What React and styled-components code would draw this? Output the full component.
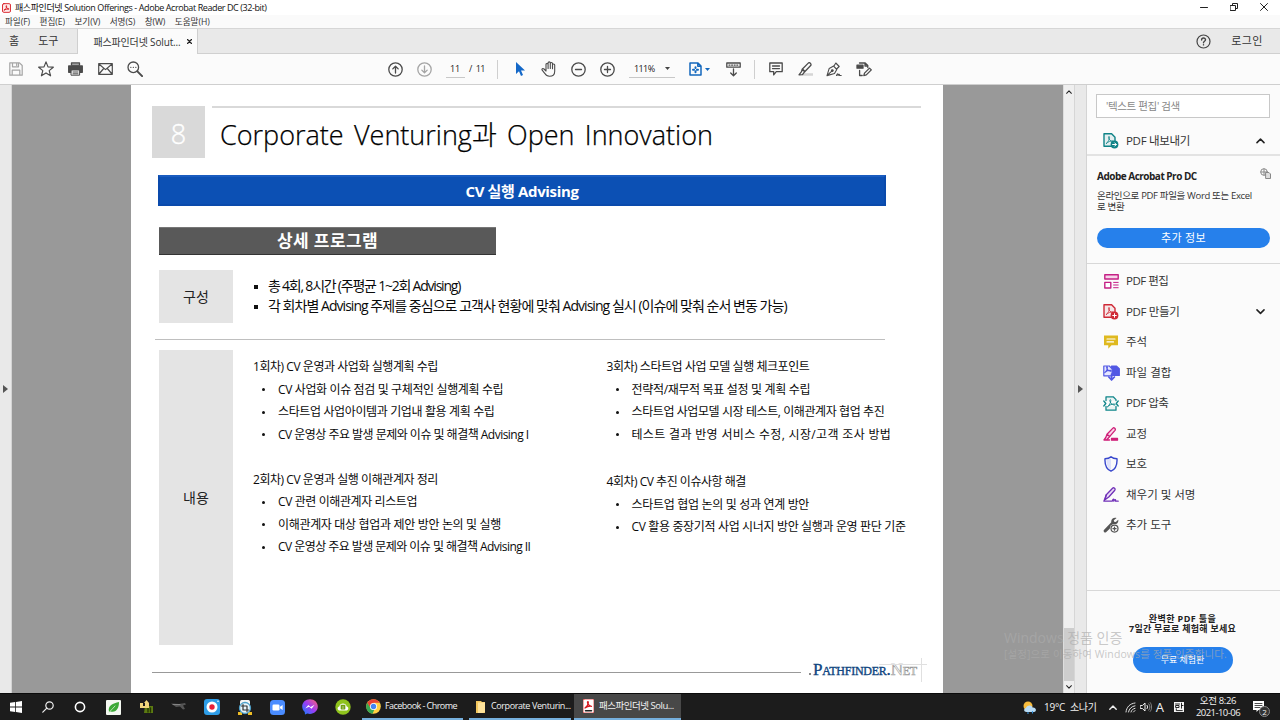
import React from "react";
import styled, { createGlobalStyle } from "styled-components";

const Global = createGlobalStyle`
  * { box-sizing: border-box; }
  html, body { margin: 0; padding: 0; overflow: hidden; }
  body { font-family: "Open Sans", "Noto Sans CJK KR", sans-serif; color: #222; background: #fff; }
  svg { display: block; flex: none; }
`;

const Screen = styled.div`
  position: relative;
  width: 1280px;
  height: 720px;
  display: flex;
  flex-direction: column;
  overflow: hidden;
`;

const Label = styled.span`
  display: block;
  white-space: pre;
  font-size: ${(p) => p.$size || 10}px;
  letter-spacing: ${(p) => p.$ls || 0}px;
  word-spacing: ${(p) => p.$ws || 0}px;
  font-weight: ${(p) => p.$weight || 400};
  color: ${(p) => p.$color || "inherit"};
  margin-left: ${(p) => p.$ml || 0}px;
  line-height: ${(p) => p.$lh || 14}px;
`;
const Gap = styled.span`
  width: ${(p) => p.$w}px;
  flex: none;
`;

/* window chrome */
const TitleBar = styled.div`
  height: 15px;
  flex: none;
  display: flex;
  align-items: center;
  background: #fff;
  color: #111;
  padding-left: 2px;
`;
const WindowButtons = styled.div`
  margin-left: auto;
  display: flex;
  align-items: center;
  gap: 22px;
  padding: 0 12px 2px 0;
`;
const MenuBar = styled.div`
  height: 13px;
  flex: none;
  display: flex;
  align-items: center;
  gap: 9.5px;
  padding-left: 5px;
  background: #fafafa;
  color: #333;
`;
const TabStrip = styled.div`
  height: 26px;
  flex: none;
  display: flex;
  align-items: center;
  background: #e9e9e9;
  border-top: 1px solid #d6d6d6;
  border-bottom: 1px solid #d0d0d0;
  color: #333;
`;
const DocTab = styled.div`
  height: 25px;
  margin: 0 0 -1px 19px;
  width: 121px;
  display: flex;
  align-items: center;
  background: #fbfbfb;
  border-left: 1px solid #cfcfcf;
  border-right: 1px solid #cfcfcf;
  padding-left: 15px;
  gap: 6px;
`;
const TabRight = styled.div`
  margin-left: auto;
  display: flex;
  align-items: center;
  gap: 20px;
  padding-right: 17px;
`;
const ToolBar = styled.div`
  height: 31px;
  flex: none;
  display: flex;
  align-items: center;
  background: #fbfbfb;
  border-bottom: 1px solid #cfcfcf;
`;
const Tool = styled.div`
  width: 18px;
  flex: none;
  display: flex;
  justify-content: center;
  margin-left: ${(p) => p.$ml || 0}px;
`;
const Field = styled.div`
  width: ${(p) => p.$w}px;
  height: 18px;
  display: flex;
  align-items: center;
  justify-content: space-between;
  padding: 0 ${(p) => p.$px || 4}px;
  margin-left: ${(p) => p.$ml}px;
  border-bottom: 1px solid #c8c8c8;
`;
const PageTotal = styled.div`
  width: 16px;
  margin-left: 4px;
`;
const Separator = styled.div`
  width: 1px;
  height: 19px;
  background: #cfcfcf;
  margin-left: ${(p) => p.$ml}px;
`;

/* workspace */
const Workspace = styled.div`
  flex: 1;
  min-height: 0;
  display: flex;
`;
const SideHandle = styled.div`
  width: 12px;
  flex: none;
  display: flex;
  align-items: center;
  justify-content: center;
  background: #e9e9e9;
  border-right: 1px solid #d4d4d4;
`;
const Canvas = styled.div`
  width: 1051px;
  flex: none;
  background: #999;
  padding-left: 119px;
`;
const Paper = styled.div`
  width: 812px;
  height: 608px;
  background: #fff;
  padding-top: 21px;
  color: #0a0a0a;
`;
const Head = styled.div`
  display: flex;
  margin-left: 21px;
  height: 52px;
`;
const HeadNumber = styled.div`
  width: 53px;
  height: 52px;
  display: flex;
  align-items: center;
  justify-content: center;
  background: #d9d9d9;
  color: #fff;
  font-size: 27px;
  font-weight: 300;
  padding-top: 3px;
  -webkit-text-stroke: 0.4px #fff;
`;
const HeadTitle = styled.div`
  width: 709px;
  margin-left: 7px;
  padding: 7px 0 0 8px;
  border-top: 2px solid #d9d9d9;
  color: #000;
  -webkit-text-stroke: 0.25px #000;
`;
const Banner = styled.div`
  width: 728px;
  height: 31px;
  margin: 17px 0 0 27px;
  display: flex;
  align-items: center;
  justify-content: center;
  background: #0c50b4;
  border: 2px solid #0a4aac;
  border-top-color: #1a5cc0;
  color: #fff;
`;
const SubBanner = styled.div`
  width: 337px;
  height: 28px;
  margin: 21px 0 0 28px;
  display: flex;
  align-items: center;
  justify-content: center;
  background: #595959;
  border-top: 1px solid #777;
  border-bottom: 1px solid #333;
  color: #fff;
`;
const Section = styled.div`
  display: flex;
  margin: ${(p) => p.$mt}px 0 0 28px;
  height: ${(p) => p.$h}px;
`;
const SectionLabel = styled.div`
  width: 74px;
  flex: none;
  display: flex;
  align-items: center;
  justify-content: center;
  background: #e4e4e4;
  color: #222;
`;
const SummaryList = styled.div`
  padding: 6px 0 0 21px;
`;
const SummaryRow = styled.div`
  height: 20px;
  display: flex;
  align-items: center;
`;
const Square = styled.span`
  width: 4px;
  height: 4px;
  background: #111;
  margin: 1px 10px 0 0;
`;
const Rule = styled.div`
  width: 730px;
  height: 1px;
  margin: 16px 0 0 24px;
  background: #bfbfbf;
`;
const Sessions = styled.div`
  width: ${(p) => p.$w}px;
  flex: none;
  padding-top: 6px;
  display: flex;
  flex-direction: column;
  gap: ${(p) => p.$gap}px;
`;
const SessionLine = styled.div`
  height: 22.5px;
  display: flex;
  align-items: center;
`;
const Dot = styled.span`
  width: 3px;
  height: 3px;
  border-radius: 50%;
  background: #111;
  margin: 0 13px 0 9px;
`;
const Footer = styled.div`
  display: flex;
  align-items: center;
  height: 24px;
  margin: 15px 0 0 21px;
`;
const FootRule = styled.div`
  width: 649px;
  height: 1px;
  background: #999;
`;
const Brand = styled.div`
  position: relative;
  margin: -5px 0 0 12px;
  font-family: "Liberation Serif", serif;
  font-variant: small-caps;
  font-size: 17px;
  line-height: 20px;
  letter-spacing: -0.25px;
  color: #0f4580;
  display: flex;
  -webkit-text-stroke: 0.35px #0f4580;
`;
const BrandNet = styled.span`
  color: #fff;
  -webkit-text-stroke: 0.6px #999;
`;
const BrandDot = styled.i`
  width: 2px;
  height: 2px;
  margin: 13px 2px 0 -4px;
  background: #888;
`;
const Cross = styled.div`
  position: absolute;
  right: -10px;
  top: -2px;
`;

const ScrollBar = styled.div`
  width: 12px;
  flex: none;
  display: flex;
  flex-direction: column;
  align-items: center;
  background: #efefef;
  border-left: 1px solid #ddd;
  border-right: 1px solid #d6d6d6;
  padding: 5px 0 4px;
`;
const Thumb = styled.div`
  width: 10px;
  height: 53px;
  margin: auto 0 4px;
  background: #cdcdcd;
`;

/* tool panel */
const Panel = styled.div`
  flex: 1;
  background: #fbfbfb;
  display: flex;
  flex-direction: column;
  color: #333;
`;
const Search = styled.div`
  height: 24px;
  margin: 9px 10px 0 9px;
  padding-left: 9px;
  display: flex;
  align-items: center;
  background: #fff;
  border: 1px solid #c8c8c8;
  color: #888;
`;
const ExportRow = styled.div`
  height: 36px;
  display: flex;
  align-items: center;
  gap: 7px;
  padding: 10px 15px 0 16px;
`;
const ToolList = styled.div`
  padding-top: 2px;
`;
const ToolRow = styled.div`
  height: 30.5px;
  display: flex;
  align-items: center;
  gap: 6px;
  padding: 0 15px;
`;
const RowEnd = styled.span`
  margin-left: auto;
`;
const Promo = styled.div`
  height: 110px;
  border-top: 2px solid #e3e3e3;
  border-bottom: 1px solid #d8d8d8;
  padding: 12px 10px 0 10px;
`;
const PromoHead = styled.div`
  display: flex;
  justify-content: space-between;
  align-items: center;
  height: 15px;
  margin-bottom: 7px;
`;
const PromoIcon = styled.span`
  margin: -5px -1px 0 0;
`;
const Pill = styled.div`
  width: ${(p) => p.$w}px;
  height: ${(p) => p.$h}px;
  margin-top: ${(p) => p.$mt}px;
  border-radius: 14px;
  background: #2680eb;
  color: #fff;
  display: flex;
  align-items: center;
  justify-content: center;
`;
const Trial = styled.div`
  margin-top: auto;
  height: 103px;
  border-top: 1px solid #d8d8d8;
  padding: 23px 2px 0 0;
  display: flex;
  flex-direction: column;
  align-items: center;
`;

const Watermark = styled.div`
  position: absolute;
  left: 1004px;
  top: 629px;
  color: rgba(172, 172, 172, 0.65);
`;

/* taskbar */
const TaskBar = styled.div`
  height: 27px;
  flex: none;
  display: flex;
  background: #1c1c1c;
  border-top: 1px solid #0b0b0b;
  color: #f2f2f2;
`;
const Launchers = styled.div`
  width: 362px;
  display: flex;
  align-items: center;
`;
const Launcher = styled.div`
  width: ${(p) => p.$w || 33}px;
  display: flex;
  justify-content: center;
`;
const Task = styled.div`
  width: ${(p) => p.$w}px;
  margin-right: ${(p) => p.$mr || 0}px;
  padding-left: ${(p) => p.$pl}px;
  display: flex;
  align-items: center;
  gap: 4px;
  background: ${(p) => (p.$active ? "#484848" : "transparent")};
  border-bottom: 2px solid #76b0de;
`;
const Tray = styled.div`
  margin-left: auto;
  display: flex;
  align-items: center;
`;
const Clock = styled.div`
  width: 50px;
  margin-left: 9px;
  display: flex;
  flex-direction: column;
  align-items: center;
`;
const Notice = styled.div`
  position: relative;
  margin: 0 15px 0 10px;
`;
const Badge = styled.span`
  position: absolute;
  left: 6px;
  top: 5px;
  width: 11px;
  height: 11px;
  border-radius: 50%;
  background: #333;
  border: 1px solid #888;
  font-size: 8px;
  line-height: 9px;
  text-align: center;
`;

const Svg = ({ w = 16, h, vb, children, c = "#4b4b4b", sw = 1.3 }) => (
  <svg width={w} height={h || w} viewBox={vb || `0 0 ${w} ${h || w}`} fill="none" stroke={c} strokeWidth={sw} strokeLinejoin="round" strokeLinecap="round">
    {children}
  </svg>
);

const Swirl = "M3.3 10.5c1.8-1.2 3.2-4.3 3.2-6.2 0-1.2-1-1.2-1 0 0 2 2.4 4.4 4.6 4.6 1.2 0 1-1.1-.3-1.1-2 0-4.6.8-6.5 2.7z";

const Chevron = ({ up, c = "#222", w = 8 }) => (
  <Svg w={w} h={w / 2 + 1} vb="0 0 8 5" c={c} sw={1.4}>
    <path d={up ? "M.8 4.2 4 1l3.2 3.2" : "M.8.8 4 4 7.2.8"} />
  </Svg>
);
const Triangle = () => (
  <Svg w={5} h={8} c="none"><path d="M0 0v8l5-4z" fill="#555" /></Svg>
);
const Down = ({ c = "#444" }) => (
  <Svg w={5} h={3} c="none"><path d="M0 0h5L2.5 3z" fill={c} /></Svg>
);

const SaveIcon = () => (
  <Svg w={14} c="#a5a5a5" sw={1.2}><path d="M.8.8h9.7l2.7 2.7v9.7H.8zM3.5.8v4h6v-4M7.700 1.800v1.700M3.200 13V8.200h7.600V13" /></Svg>
);
const StarIcon = () => (
  <Svg w={16} sw={1.2}><path d="m8 .9 2 5 5.3.3-4.1 3.4 1.4 5.2L8 11.9l-4.6 2.9 1.4-5.2L.7 6.2 6 5.9z" /></Svg>
);
const PrintIcon = () => (
  <Svg w={15} h={14}><path d="M3.5 1h8v2.2h-8z" /><path d="M.7 4h13.600v6.300H12V8H3v2.300H.7z" fill="#4b4b4b" /><path d="M3.400 8h8.200v5.200H3.400zM5 10h5M5 11.800h5" strokeWidth="1" fill="#fbfbfb" /></Svg>
);
const MailIcon = () => (
  <Svg w={15} h={12} sw={1.2}><path d="M.7.7h13.600v10.600H.7zM.9 1l6.600 5.600L14.100 1M1 11l4.700-5.500M14 11 9.300 5.500" /></Svg>
);
const FindIcon = () => (
  <Svg w={16}><circle cx="6.3" cy="6.3" r="5.3" /><path d="m10.4 10.4 4.7 4.7" strokeWidth="2" /><path d="M3.8 6.3h.1M6.3 6.3h.1M8.8 6.3h.1" /></Svg>
);
const CircleIcon = ({ d, c }) => (
  <Svg w={15} c={c}><circle cx="7.5" cy="7.5" r="6.7" /><path d={d} /></Svg>
);
const HandIcon = () => (
  <Svg w={17} h={16} sw={1.1}><path d="M5 9.800V3.500c0-1.400 2.100-1.400 2.100 0V7.500M7.100 3.300V2c0-1.500 2.200-1.500 2.200 0v5.500M9.300 2.600c0-1.400 2.200-1.400 2.200 0v5.200M11.500 4c0-1.400 2.200-1.400 2.200 0v6.200c0 3.300-2 5.100-5.200 5.100-2.300 0-3.600-1-4.800-3L1.200 9.200C.3 7.800 1.900 7 3 8l2 2" /></Svg>
);
const FitIcon = () => (
  <Svg w={13} h={14} c="#1468bd" sw={1.5}><path d="M1 1h8l3 3v9H1zM8.800 1v3.300H12" /><path d="M6.500 5.300v.8M6.500 9.300v.9M4 7.700h1M8 7.700h1" strokeWidth="2" /></Svg>
);
const ReadIcon = () => (
  <Svg w={15}><path d="M.8 1h13.400v4.200H.8z" /><path d="M3 3.100h9" strokeDasharray="1 1.600" /><path d="M7.500 7v6.600M4.700 11l2.800 2.800 2.800-2.800" /></Svg>
);
const CommentIcon = () => (
  <Svg w={14}><path d="M.8 1h12.400v8.700H7.300l-2.600 3.200V9.700H.8zM3.500 4h7M3.500 6.600h7" /></Svg>
);
const HighlightIcon = () => (
  <Svg w={15} h={14}><path d="M5.500 12.500h9" stroke="#d5d5d5" strokeWidth="2.500" /><path d="M4.200 7.200 10.500.9c1-.9 3 1 2.400 2.400L6.700 9.700zM4.200 7.200l-.7 2.500L1 12.800l3.500-.2 2.200-2.900M5 7.500l2 2" /></Svg>
);
const SignIcon = () => (
  <Svg w={16} h={15} sw={1.1}><path d="M1 13.600 3.200 6.400l4.400-2.300 3.200 3.400-2.300 4L1 13.600zm0 0L6 8.800M8 4l1.800-3 3.400 3.500-2.600 2.500M10.500 13.500c1-2.400 1.800-2.200 1.500 0 1.200-1.700 1.500-1.400 1.600 0h1.600" /><circle cx="6.300" cy="8.600" r=".9" fill="#4b4b4b" /></Svg>
);
const EditPageIcon = () => (
  <Svg w={16} h={15}><path d="M1 3.200h6v3H1z" fill="#4b4b4b" /><path d="M3.500 1h5.700l2.600 2.500v2M9 1v3h2.800M3.600 8.500v5h2.600M7.800 13.600l.7-2.500 5-5 1.800 1.800-5 5z" /></Svg>
);

const PageShape = ({ c }) => (
  <>
    <path d="M1 .8h7.6L12 4.2v9H1z" fill={c + "18"} stroke={c} />
    <path d={Swirl} stroke={c} strokeWidth=".8" />
  </>
);
const ExportIcon = () => (
  <Svg w={16} c="#0f8387" sw={1.4}><PageShape c="#0f8387" /><circle cx="11.5" cy="11.5" r="3.900" fill="#0f8387" stroke="none" /><path d="M9.600 11.500h3.600m-1.500-1.600 1.600 1.600-1.600 1.600" stroke="#fff" strokeWidth="1" /></Svg>
);
const EditPdfIcon = () => (
  <Svg w={15} c="#c52085" sw={1.4}><path d="M.8.8h13.400V5H.8z" fill="#f6d5e9" /><path d="M.8 8.400h6v5.600h-6z" fill="#fff" /><path d="M9.600 8.400h4.600M9.600 11h4.600M9.600 13.700h4.600" strokeWidth="1" /></Svg>
);
const CreateIcon = () => (
  <Svg w={16} c="#cf2936" sw={1.4}><PageShape c="#cf2936" /><circle cx="11.5" cy="11.5" r="3.900" fill="#cf2936" stroke="none" /><path d="M9.700 11.500h3.600M11.500 9.700v3.600" stroke="#fff" strokeWidth="1" /></Svg>
);
const NoteIcon = () => (
  <Svg w={14} c="none"><path d="M0 .5h14v9.800H7.500L4.300 13.800V10.300H0z" fill="#dfb91f" /><path d="M3 4h8M3 6.900h6.500" stroke="#fff" strokeWidth="1.200" /></Svg>
);
const CombineIcon = () => (
  <Svg w={17} h={16} c="#5258e4" sw={1.2}><path d="M8.500 1h4.800l3 2.800v6.700H8.500z" fill="#5258e4" /><path d="M.8 1h5.500l2.800 2.800v7H.8z" fill="#e5e6ff" /><g transform="translate(-1.1 -1.3) scale(.85)"><path d={Swirl} /></g><path d="M8.600 9v5.500M5.800 12l2.800 3 2.800-3" strokeWidth="1.700" /></Svg>
);
const CompressIcon = () => (
  <Svg w={16} h={15} c="#10868a"><path d="M3 4.500V.8h7.200L13 3.600v1M3 10.500v3.700h10v-3.700" fill="#10868a11" /><g transform="translate(1.300 .2)"><path d={Swirl} strokeWidth=".9" /></g><path d="m.8 5 2 2.500-2 2.500M15.200 5l-2 2.500 2 2.500" /></Svg>
);
const RedactIcon = () => (
  <Svg w={16} h={14} c="#cf1f78"><path d="M4 7.200 9.900 1.100c1-1 3.200.8 2.100 2.200L6.600 9.600zM4 7.200 2.800 10.500 1 13h5.500" fill="#f8d4e7" /><path d="M6.600 9.600 4 12.500" /><path d="M8.500 11.400h6v1.800h-6z" fill="#cf1f78" /></Svg>
);
const ShieldIcon = () => (
  <Svg w={14} h={16} c="#3847cc" sw={1.4}><path d="M7 2.600v11.200C3.600 12 2.400 9.500 2.500 3.800z" fill="#dfe2fb" stroke="none" /><path d="M7 .8c1.600 1.500 3.600 2 6 2 .3 5.500-.6 10-6 12.300C1.600 12.800.7 8.300 1 2.800c2.400 0 4.400-.5 6-2z" /></Svg>
);
const FillIcon = () => (
  <Svg w={16} h={15} c="#7030b8"><path d="M3.300 7.700 9.800 1c1-.8 3 .8 2 2.200L5.800 10 2 12.800z" fill="#eadcf6" /><path d="M.9 14.200 3.300 7.700M.9 14.200h8.300c1-2.800 2-2.600 1.600 0 1.300-2.300 2-1.600 1.800 0h2.600" /></Svg>
);
const WrenchIcon = () => (
  <Svg w={16} c="none">
    <path d="M13.600.9 10.800 3.200l.3 1.500 1.700.4 2.400-2.300c.7 2.500-1.200 4.700-3.700 4.500L3 15.200C1.700 16.200-.1 14.400.9 13.100L8.300 5.300C7.700 2.300 10.400-.1 13.600.9z" fill="#555" />
    <circle cx="11.500" cy="11.600" r="4.600" fill="#fbfbfb" />
    <circle cx="11.500" cy="11.600" r="3.500" stroke="#555" strokeWidth="1.200" />
    <path d="M9.900 11.600h3.200M11.500 10v3.200" stroke="#555" strokeWidth="1.200" />
  </Svg>
);
const AcrobatIcon = () => (
  <Svg w={9} h={10} vb="0 0 12 13" c="#d71920" sw={1.2}>
    <rect x=".7" y=".7" width="10.600" height="11.600" rx="1.800" fill="#ffe9e9" />
    <path d="M3 9.500c1.700-1 3.200-3.600 3.200-5.400 0-1-.9-1-.8 0 .1 1.700 2 3.700 3.700 3.700M3 9c1.800-.8 3.700-1.200 5.800-1.100" strokeWidth="1.200" />
  </Svg>
);

const menus = ["파일(F)", "편집(E)", "보기(V)", "서명(S)", "창(W)", "도움말(H)"];

const tools = [
  { name: "PDF 편집", Icon: EditPdfIcon, ls: -0.5 },
  { name: "PDF 만들기", Icon: CreateIcon, ls: -0.35, open: true },
  { name: "주석", Icon: NoteIcon, ls: 0 },
  { name: "파일 결합", Icon: CombineIcon, ls: 0 },
  { name: "PDF 압축", Icon: CompressIcon, ls: -0.5 },
  { name: "교정", Icon: RedactIcon, ls: 0 },
  { name: "보호", Icon: ShieldIcon, ls: 0 },
  { name: "채우기 및 서명", Icon: FillIcon, ls: 0 },
  { name: "추가 도구", Icon: WrenchIcon, ls: 0 },
];

const leftSessions = [
  { head: ["1회차) CV 운영과 사업화 실행계획 수립", -0.45], items: [["CV 사업화 이슈 점검 및 구체적인 실행계획 수립", -0.37], ["스타트업 사업아이템과 기업내 활용 계획 수립", -0.37], ["CV 운영상 주요 발생 문제와 이슈 및 해결책 Advising I", -0.52]] },
  { head: ["2회차) CV 운영과 실행 이해관계자 정리", -0.45], items: [["CV 관련 이해관계자 리스트업", -0.4], ["이해관계자 대상 협업과 제안 방안 논의 및 실행", -0.33], ["CV 운영상 주요 발생 문제와 이슈 및 해결책 Advising II", -0.55]] },
];
const rightSessions = [
  { head: ["3회차) 스타트업 사업 모델 실행 체크포인트", -0.45], items: [["전략적/재무적 목표 설정 및 계획 수립", -0.33], ["스타트업 사업모델 시장 테스트, 이해관계자 협업 추진", -0.41], ["테스트 결과 반영 서비스 수정, 시장/고객 조사 방법", 0.33]] },
  { head: ["4회차) CV 추진 이슈사항 해결", -0.48], items: [["스타트업 협업 논의 및 성과 연계 방안", -0.32], ["CV 활용 중장기적 사업 시너지 방안 실행과 운영 판단 기준", -0.35]] },
];

const SessionGroup = ({ head, items }) => (
  <div>
    <SessionLine><Label $size={12} $ls={head[1]}>{head[0]}</Label></SessionLine>
    {items.map(([text, ls]) => (
      <SessionLine key={text}><Dot /><Label $size={12} $ls={ls}>{text}</Label></SessionLine>
    ))}
  </div>
);

const Document = () => (
  <Paper>
    <Head>
      <HeadNumber>8</HeadNumber>
      <HeadTitle><Label $size={27} $lh={40} $weight={300} $ws={3.3}>Corporate Venturing과 Open Innovation</Label></HeadTitle>
    </Head>
    <Banner><Label $size={15} $weight={700} $ls={-0.35} $lh={18}>CV 실행 Advising</Label></Banner>
    <SubBanner><Label $size={17} $weight={700} $ls={0.4} $lh={20}>상세 프로그램</Label></SubBanner>
    <Section $mt={15} $h={53}>
      <SectionLabel><Label $size={14} $lh={18}>구성</Label></SectionLabel>
      <SummaryList>
        <SummaryRow><Square /><Label $size={14} $ls={-1.22} $lh={18}>총 4회, 8시간 (주평균 1~2회 Advising)</Label></SummaryRow>
        <SummaryRow><Square /><Label $size={14} $ls={-0.96} $lh={18}>각 회차별 Advising 주제를 중심으로 고객사 현황에 맞춰 Advising 실시 (이슈에 맞춰 순서 변동 가능)</Label></SummaryRow>
      </SummaryList>
    </Section>
    <Rule />
    <Section $mt={10} $h={295}>
      <SectionLabel><Label $size={14} $lh={18}>내용</Label></SectionLabel>
      <Gap $w={20} />
      <Sessions $w={353.5} $gap={22.5}>{leftSessions.map((g) => <SessionGroup key={g.head[0]} {...g} />)}</Sessions>
      <Sessions $w={320} $gap={25}>{rightSessions.map((g) => <SessionGroup key={g.head[0]} {...g} />)}</Sessions>
    </Section>
    <Footer>
      <FootRule />
      <Brand>
        <BrandDot />Pathfinder.<BrandNet>Net</BrandNet>
        <Cross><Svg w={48} h={24} c="#e0e0e0" sw={1}><path d="M0 6.500h48M42.500 0v24" /></Svg></Cross>
      </Brand>
    </Footer>
  </Paper>
);

const ToolPanel = () => (
  <Panel>
    <Search><Label $size={10.5} $ls={-0.35}>'텍스트 편집' 검색</Label></Search>
    <ExportRow>
      <ExportIcon /><Label $size={11.5} $ls={-0.3}>PDF 내보내기</Label><RowEnd><Chevron up w={9} /></RowEnd>
    </ExportRow>
    <Promo>
      <PromoHead>
        <Label $size={10} $weight={700} $ls={-0.5} $color="#222">Adobe Acrobat Pro DC</Label>
        <PromoIcon><Svg w={11} c="#888" sw={1}><circle cx="4" cy="4" r="3.300" /><path d="M1 4h6M4 1v6M6 4.500h3l1.500 1.500v4.500H6z" fill="#ddd" /></Svg></PromoIcon>
      </PromoHead>
      <Label $size={9.5} $lh={11} $ls={-0.34}>{"온라인으로 PDF 파일을 Word 또는 Excel\n로 변환"}</Label>
      <Pill $w={173} $h={20} $mt={16}><Label $size={11} $ls={0.3}>추가 정보</Label></Pill>
    </Promo>
    <ToolList>
      {tools.map(({ name, Icon, ls, open }) => (
        <ToolRow key={name}>
          <Tool><Icon /></Tool>
          <Label $size={11.5} $ls={ls}>{name}</Label>
          {open && <RowEnd><Chevron w={9} /></RowEnd>}
        </ToolRow>
      ))}
    </ToolList>
    <Trial>
      <Label $size={9} $lh={10} $weight={700} $color="#222" $ls={0.4}>완벽한 PDF 툴을</Label>
      <Label $size={9} $lh={10} $weight={700} $color="#222" $ls={0.25}>7일간 무료로 체험해 보세요</Label>
      <Pill $w={100} $h={26} $mt={13}><Label $size={9}>무료 체험판</Label></Pill>
    </Trial>
  </Panel>
);

const Bottom = () => (
  <TaskBar>
    <Launchers>
      <Launcher $w={32}><Svg w={12} c="none"><path d="M0 1.700 5.200 1v4.600H0zM6 .9 12 0v5.600H6zM0 6.400h5.200V11L0 10.300zM6 6.400h6V12l-6-.9z" fill="#fff" /></Svg></Launcher>
      <Launcher $w={32}><Svg w={12} c="#eee" sw={1.2}><circle cx="7.500" cy="4.500" r="3.700" /><path d="M4.800 7.200.8 11.200" /></Svg></Launcher>
      <Launcher $w={32}><Svg w={12} c="#fff" sw={1.6}><circle cx="6" cy="6" r="4.600" /></Svg></Launcher>
      <Launcher $w={34}><Svg w={15} c="none"><rect width="15" height="15" rx="1" fill="#f4f8f1" /><path d="M3 12C1.500 5 7 3.500 13 2c0 6-2.500 11-8.500 9.500z" fill="#3ca936" /><path d="M2.500 13 9 6" stroke="#d8f0d0" strokeWidth=".8" /></Svg></Launcher>
      <Launcher><Svg w={14} c="none"><path d="M5 6h8v7H4z" fill="#5c7a12" /><path d="M8 7v5M10.500 8v4" stroke="#223300" /><path d="M0 3h3v3h2V3H4l2.500-3L9 3v5H0z" fill="#f1d67c" /></Svg></Launcher>
      <Launcher $w={32}><Svg w={16} h={10} c="none"><path d="M0 1.500 8 2l6-1 1 1.500-3 1 2 3.500-2 .5-3-3L5 5z" fill="#555" /><path d="M2 2.500h7" stroke="#999" strokeWidth=".7" /></Svg></Launcher>
      <Launcher><Svg w={16} c="none"><rect width="16" height="16" rx="3" fill="#2d9de8" /><circle cx="8" cy="8" r="5.500" fill="#fff" /><circle cx="8" cy="8" r="2.700" fill="#e8203a" /><circle cx="14" cy="2.200" r=".8" fill="#fff" /></Svg></Launcher>
      <Launcher><Svg w={14} h={15} c="none"><path d="M0 12h4v3H0zM10 12h4v3h-4z" fill="#efbd25" /><rect x="2" width="10" height="6" rx="1.500" fill="#f5f5f5" /><circle cx="7" cy="8" r="5.500" fill="#e9f4fa" stroke="#4d9fc8" /><path d="M5 4.500v5.500h5.500M3.500 6H9v5.500" stroke="#333" strokeWidth="1.200" /></Svg></Launcher>
      <Launcher $w={32}><Svg w={15} c="none"><rect width="15" height="15" rx="3.500" fill="#4a8cff" /><rect x="2.500" y="4.500" width="7" height="6" rx="1.200" fill="#fff" /><path d="m10 6.700 2.600-1.800v5.200L10 8.300z" fill="#fff" /></Svg></Launcher>
      <Launcher><svg width="16" height="16" viewBox="0 0 16 16"><defs><linearGradient id="ms" x1="0" y1="1" x2="1" y2="0"><stop offset="0" stopColor="#0a86ff" /><stop offset=".5" stopColor="#9b3cf6" /><stop offset="1" stopColor="#ff6470" /></linearGradient></defs><path d="M8 .3C3.500.3.2 3.500.2 7.600c0 2.200.9 4.100 2.500 5.400L3 15.500l2.300-1c4.900 1.500 10.500-1.300 10.500-6.900C15.800 3.500 12.500.3 8 .3z" fill="url(#ms)" /><path d="m3.300 9.600 3-3.600 2.300 2 4-2.300-3 4-2.500-2z" fill="#fff" /></svg></Launcher>
      <Launcher><Svg w={16} c="none"><circle cx="8" cy="8" r="7.700" fill="#8fc31c" /><path d="M4.500 11.500c-2.500-.5-2.400-3.500-.2-4C5 3.500 11 3.500 11.700 7.500c2.200.5 2.200 3.500-.2 4z" fill="#fff" /><path d="M6.300 6.300h3.400v3.500H6.300zM6.300 8h3" stroke="#709f12" /></Svg></Launcher>
    </Launchers>
    <Task $w={101} $mr={6} $pl={4}>
      <Svg w={15} c="none"><circle cx="7.500" cy="7.500" r="7.300" fill="#ffcf42" /><path d="M1.200 3.800a7.300 7.300 0 0 1 12.600 0H7.500L4 8.500z" fill="#e84335" /><path d="M1.200 3.800 5 9.800l3.300 1L6.500 14.800A7.300 7.300 0 0 1 1.200 3.800z" fill="#38a852" /><circle cx="7.500" cy="7.500" r="3.500" fill="#fff" /><circle cx="7.500" cy="7.500" r="2.700" fill="#4385f4" /></Svg>
      <Label $size={9} $ls={-0.55}>Facebook - Chrome</Label>
    </Task>
    <Task $w={102} $mr={3} $pl={6}>
      <Svg w={11} h={13} c="none"><path d="M1 1h5l1 1h3v11H1z" fill="#f3c75d" /><path d="M3 2.500h7V12l-2 1H3z" fill="#ffe39a" /></Svg>
      <Label $size={9} $ls={-0.4} $ml={1}>Corporate Venturin...</Label>
    </Task>
    <Task $w={107} $pl={9} $active>
      <Svg w={11} h={14} c="none"><rect width="11" height="14" rx="1" fill="#fff" stroke="#e42a2a" strokeWidth=".8" /><path d="M2 9c1.700-1 3.300-3.500 3.300-5.500 0-1-.9-1-.8 0 .1 1.800 2 3.800 4 3.800-2.300-.3-4.500.3-6.500 1.700" stroke="#d71920" /><path d="M2.500 11.800h6" stroke="#222" strokeWidth="1.500" /></Svg>
      <Label $size={9.5} $ls={-0.48} $ml={1}>패스파인더넷 Solu...</Label>
    </Task>
    <Tray>
      <Svg w={14} h={13} c="none"><circle cx="5" cy="5" r="4.500" fill="#f8bc3c" /><path d="M3.500 11C.5 11 .5 7.500 3 7c.5-3 5.500-3.500 6.500-.5 4-.5 4.500 4.500 1.500 4.500z" fill="#b9dcf5" /><path d="M5 11.500v1M9.500 10.500v1.500" stroke="#3291db" strokeWidth="1.200" /></Svg>
      <Label $size={10} $ml={7} $ls={-0.25} $ws={2.5}>19°C 소나기</Label>
      <Gap $w={12} /><Chevron up c="#eee" w={8} />
      <Gap $w={8} /><Svg w={11} c="#ddd" sw={1}><path d="M1 10C1.500 5 5 1.500 10 1M3.500 10C4 7 6.500 4.300 10 3.800M6 10c.5-2 2-3.300 4-3.700M8.500 10l1.500-1.500" /></Svg>
      <Gap $w={4} /><Svg w={12} h={10} c="#eee" sw={1}><path d="M.6 3.500h1.800L5 1v8L2.400 6.500H.6zM7 3.300c.8.9.8 2.500 0 3.400" /><path d="M8.700 1.800c1.700 1.800 1.700 4.600 0 6.400M10.200.6c2 2.500 2 6.300 0 8.800" stroke="#888" /></Svg>
      <Label $size={13} $ml={4}>A</Label>
      <Gap $w={10} /><Svg w={10} c="none"><rect width="10" height="10" fill="#f4f4f4" /><path d="M1.500 2h4M2 3.500h3v2H2zM7.500 1.200v5M7.500 3.500H9M2.300 6.800v1.800h6" stroke="#111" strokeWidth=".9" /></Svg>
      <Clock>
        <Label $size={9.5} $lh={12} $ls={-0.35}>오전 8:26</Label>
        <Label $size={9.5} $lh={12} $ls={-0.55}>2021-10-06</Label>
      </Clock>
      <Notice>
        <Svg w={12} c="none"><path d="M0 0h11v9H5.500L3.500 11V9H0z" fill="#fff" /><path d="M2 2.500h7M2 4.500h7M2 6.500h5" stroke="#222" strokeWidth=".8" /></Svg>
        <Badge>2</Badge>
      </Notice>
    </Tray>
  </TaskBar>
);

export default function App() {
  return (
    <Screen>
      <Global />
      <TitleBar>
        <AcrobatIcon />
        <Label $size={9} $ml={4} $ls={-0.41}>패스파인더넷 Solution Offerings - Adobe Acrobat Reader DC (32-bit)</Label>
        <WindowButtons>
          <Svg w={8} c="#222" sw={1}><path d="M.5 4.500h7" /></Svg>
          <Svg w={8} c="#222" sw={1}><path d="M.5 2.500h5v5h-5zM2.500 2.500v-2h5v5h-2" /></Svg>
          <Svg w={8} c="#222" sw={1}><path d="m.5.5 7 7M7.500.5l-7 7" /></Svg>
        </WindowButtons>
      </TitleBar>
      <MenuBar>
        {menus.map((t) => <Label key={t} $size={8.6} $lh={12} $ls={-0.05}>{t}</Label>)}
      </MenuBar>
      <TabStrip>
        <Label $size={11} $ml={9}>홈</Label>
        <Label $size={11} $ml={19}>도구</Label>
        <DocTab>
          <Label $size={10} $ls={-0.15}>패스파인더넷 Solut...</Label>
          <Svg w={5} c="#222" sw={1.2}><path d="m.5.5 4 4M4.500.5l-4 4" /></Svg>
        </DocTab>
        <TabRight>
          <Svg w={15} c="#444" sw={1.2}><circle cx="7.500" cy="7.500" r="6.500" /><path d="M5.600 6c0-2.700 3.900-2.500 3.900-.3 0 1.500-2 1.500-2 3M7.500 10.800v.1" strokeWidth="1.400" /></Svg>
          <Label $size={11} $ls={0.5}>로그인</Label>
        </TabRight>
      </TabStrip>
      <ToolBar>
        <Tool $ml={7}><SaveIcon /></Tool>
        <Tool $ml={12}><StarIcon /></Tool>
        <Tool $ml={11}><PrintIcon /></Tool>
        <Tool $ml={12}><MailIcon /></Tool>
        <Tool $ml={11.5}><FindIcon /></Tool>
        <Tool $ml={243}><CircleIcon d="M7.500 11V4.300M4.800 6.900l2.700-2.700 2.700 2.700" /></Tool>
        <Tool $ml={11}><CircleIcon c="#a5a5a5" d="M7.500 4v6.700M4.800 8.100l2.700 2.700 2.700-2.700" /></Tool>
        <Field $w={19} $ml={12.5}><Label $size={9} $ls={-0.2}>11</Label></Field>
        <PageTotal><Label $size={9} $ls={-0.5} $ws={2}>/ 11</Label></PageTotal>
        <Separator $ml={12} />
        <Tool $ml={12.5}><Svg w={10} h={14} c="none"><path d="M1 0v12l3-2.700L6 14l2-.9-2-4.500h4z" fill="#1468c8" /></Svg></Tool>
        <Tool $ml={11.5}><HandIcon /></Tool>
        <Tool $ml={11}><CircleIcon d="M4.500 7.500h6" /></Tool>
        <Tool $ml={11}><CircleIcon d="M4.500 7.500h6M7.500 4.500v6" /></Tool>
        <Field $w={46} $ml={13} $px={5}><Label $size={9} $ls={-0.6}>111%</Label><Down /></Field>
        <Tool $ml={11}><FitIcon /></Tool>
        <Gap $w={1} /><Down c="#1468bd" />
        <Tool $ml={14}><ReadIcon /></Tool>
        <Separator $ml={12} />
        <Tool $ml={12}><CommentIcon /></Tool>
        <Tool $ml={11}><HighlightIcon /></Tool>
        <Tool $ml={11}><SignIcon /></Tool>
        <Tool $ml={12}><EditPageIcon /></Tool>
      </ToolBar>
      <Workspace>
        <SideHandle><Triangle /></SideHandle>
        <Canvas><Document /></Canvas>
        <ScrollBar><Chevron up w={6} /><Thumb /><Chevron w={6} /></ScrollBar>
        <SideHandle><Triangle /></SideHandle>
        <ToolPanel />
      </Workspace>
      <Bottom />
      <Watermark>
        <Label $size={14} $lh={18}>Windows 정품 인증</Label>
        <Label $size={10.5} $lh={14} $ls={0.1}>[설정]으로 이동하여 Windows를 정품 인증합니다.</Label>
      </Watermark>
    </Screen>
  );
}
